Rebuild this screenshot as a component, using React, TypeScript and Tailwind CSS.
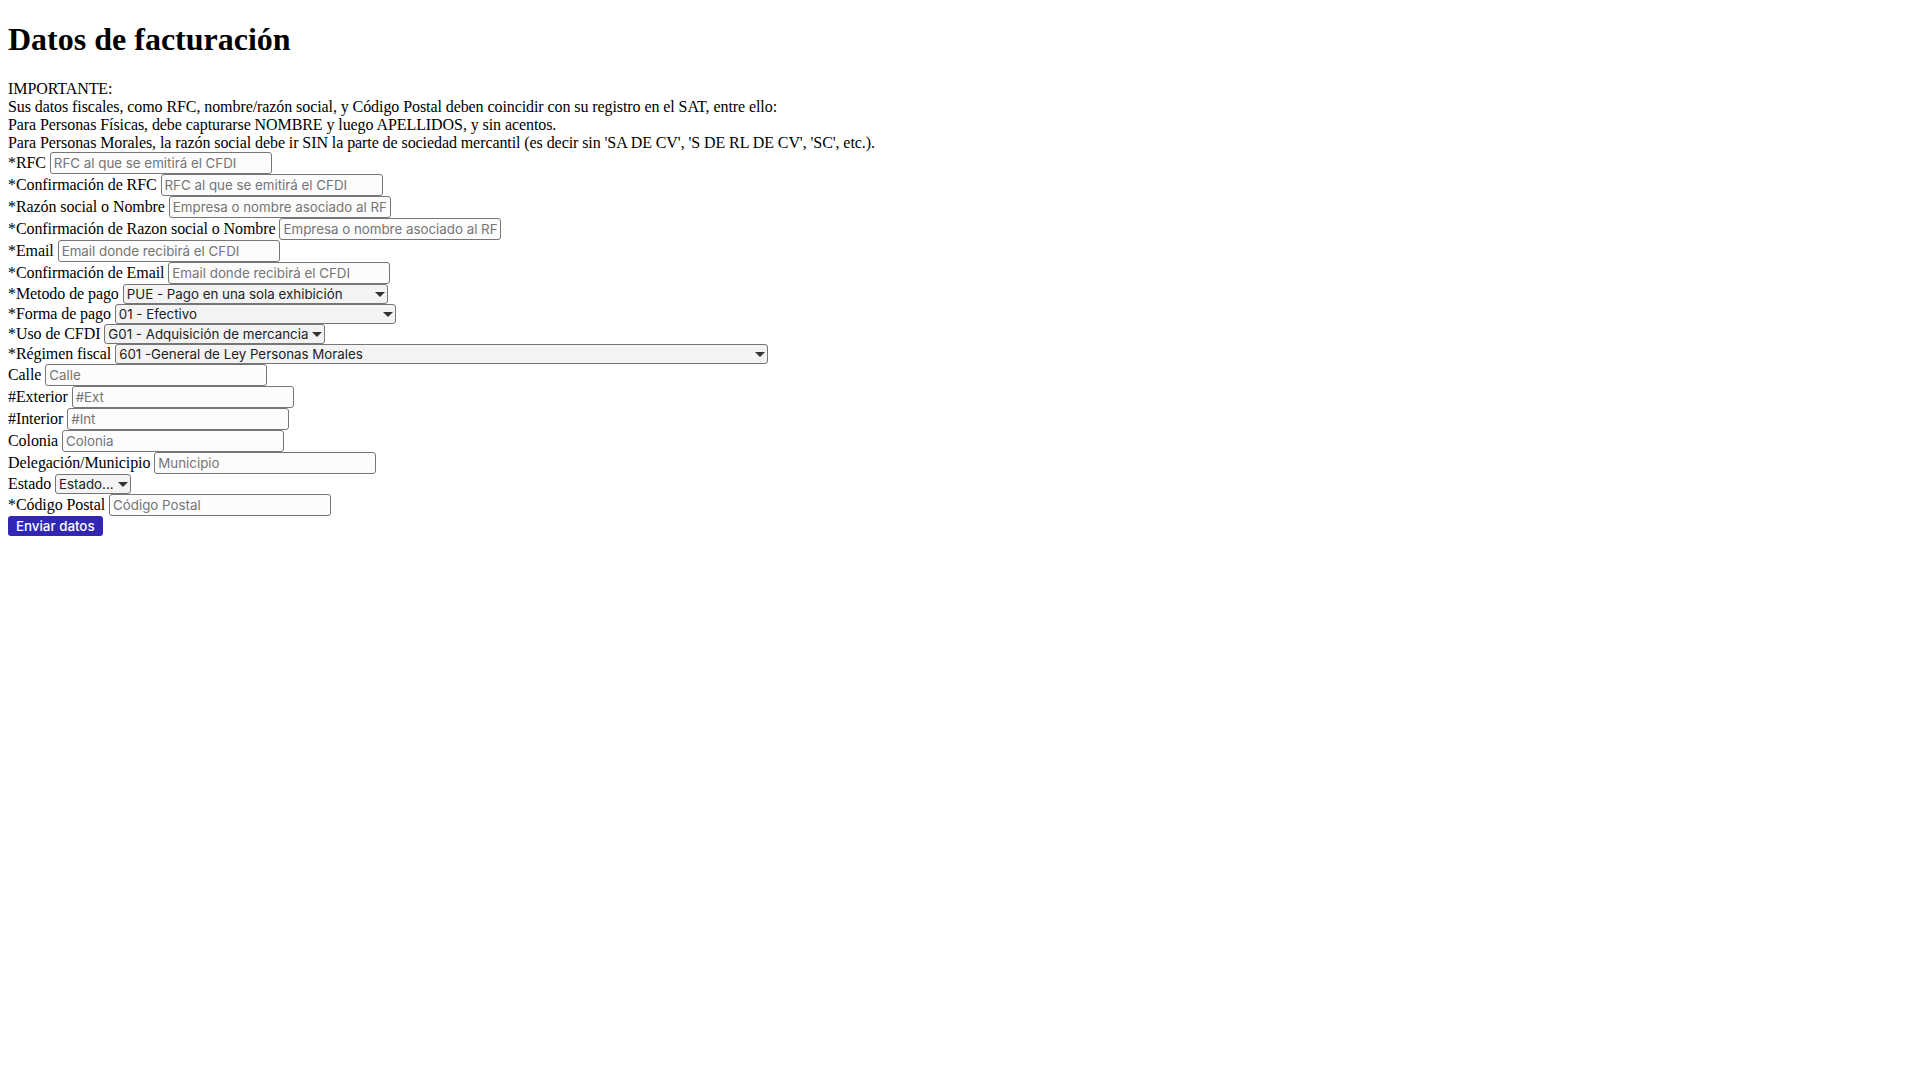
import type { ReactNode } from 'react'

const inputCls =
    "inline-block h-[22px] w-[222px] rounded-[3px] border border-[#767676] bg-[#fcfcfc] px-[3px] font-['Inter',sans-serif] text-[13.333px] tracking-normal text-black placeholder:text-[#757575] outline-none"

const selectCls =
    "block h-[20px] appearance-none rounded-[3px] border border-[#767676] bg-[#f3f3f3] pl-[3px] pr-[14px] font-['Inter',sans-serif] text-[13.333px] tracking-normal text-[#222] outline-none"

function Row({ label, children }: { label: string; children: ReactNode }) {
    return (
        <div>
            {label} {children}
        </div>
    )
}

function TextField({ label, placeholder }: { label: string; placeholder: string }) {
    return (
        <Row label={label}>
            <input type="text" placeholder={placeholder} className={inputCls} />
        </Row>
    )
}

function SelectField({ label, width, options }: { label: string; width: string; options: string[] }) {
    return (
        <Row label={label}>
            <span className={`relative inline-block align-baseline ${width}`}>
                <select className={`${selectCls} w-full`} defaultValue={options[0]}>
                    {options.map((o) => (
                        <option key={o}>{o}</option>
                    ))}
                </select>
                {/* dropdown arrow */}
                <svg
                    viewBox="0 0 10 5"
                    className="pointer-events-none absolute right-[3px] top-[8px] h-[5px] w-[10px] fill-[#333]"
                >
                    <path d="M0 0h10L5 5z" />
                </svg>
            </span>
        </Row>
    )
}

export default function App() {
    return (
        <div className="min-h-screen bg-white px-2 font-['Liberation_Serif','Times_New_Roman',serif] text-[16px] leading-[normal] tracking-[-0.08px] text-black">
            <h1 className="my-[21.44px] text-[32px] font-bold leading-[normal] tracking-normal">Datos de facturación</h1>

            <div>IMPORTANTE:</div>
            <div>Sus datos fiscales, como RFC, nombre/razón social, y Código Postal deben coincidir con su registro en el SAT, entre ello:</div>
            <div>Para Personas Físicas, debe capturarse NOMBRE y luego APELLIDOS, y sin acentos.</div>
            <div>
                Para Personas Morales, la razón social debe ir SIN la parte de sociedad mercantil (es decir sin 'SA DE CV', 'S DE RL DE CV', 'SC', etc.).
            </div>

            <form onSubmit={(e) => e.preventDefault()}>
                <TextField label="*RFC" placeholder="RFC al que se emitirá el CFDI" />
                <TextField label="*Confirmación de RFC" placeholder="RFC al que se emitirá el CFDI" />
                <TextField label="*Razón social o Nombre" placeholder="Empresa o nombre asociado al RFC" />
                <TextField label="*Confirmación de Razon social o Nombre" placeholder="Empresa o nombre asociado al RFC" />
                <TextField label="*Email" placeholder="Email donde recibirá el CFDI" />
                <TextField label="*Confirmación de Email" placeholder="Email donde recibirá el CFDI" />

                <SelectField
                    label="*Metodo de pago"
                    width="w-[265px]"
                    options={['PUE - Pago en una sola exhibición', 'PPD - Pago en parcialidades o diferido']}
                />
                <SelectField
                    label="*Forma de pago"
                    width="w-[281px]"
                    options={['01 - Efectivo', '02 - Cheque nominativo', '03 - Transferencia electrónica de fondos', '04 - Tarjeta de crédito']}
                />
                <SelectField
                    label="*Uso de CFDI"
                    width="w-[221px]"
                    options={['G01 - Adquisición de mercancia', 'G03 - Gastos en general']}
                />
                <SelectField
                    label="*Régimen fiscal"
                    width="w-[653px]"
                    options={['601 -General de Ley Personas Morales', '612 -Personas Físicas con Actividades Empresariales y Profesionales']}
                />

                <TextField label="Calle" placeholder="Calle" />
                <TextField label="#Exterior" placeholder="#Ext" />
                <TextField label="#Interior" placeholder="#Int" />
                <TextField label="Colonia" placeholder="Colonia" />
                <TextField label="Delegación/Municipio" placeholder="Municipio" />

                <SelectField label="Estado" width="w-[76px]" options={['Estado...', 'Aguascalientes', 'Jalisco']} />

                <TextField label="*Código Postal" placeholder="Código Postal" />

                <div>
                    <button
                        type="submit"
                        className="inline-block h-[20px] rounded-[3px] bg-[#3127b4] px-[8px] font-['Inter',sans-serif] text-[13.333px] font-medium tracking-normal text-white"
                    >
                        Enviar datos
                    </button>
                </div>
            </form>
        </div>
    )
}
